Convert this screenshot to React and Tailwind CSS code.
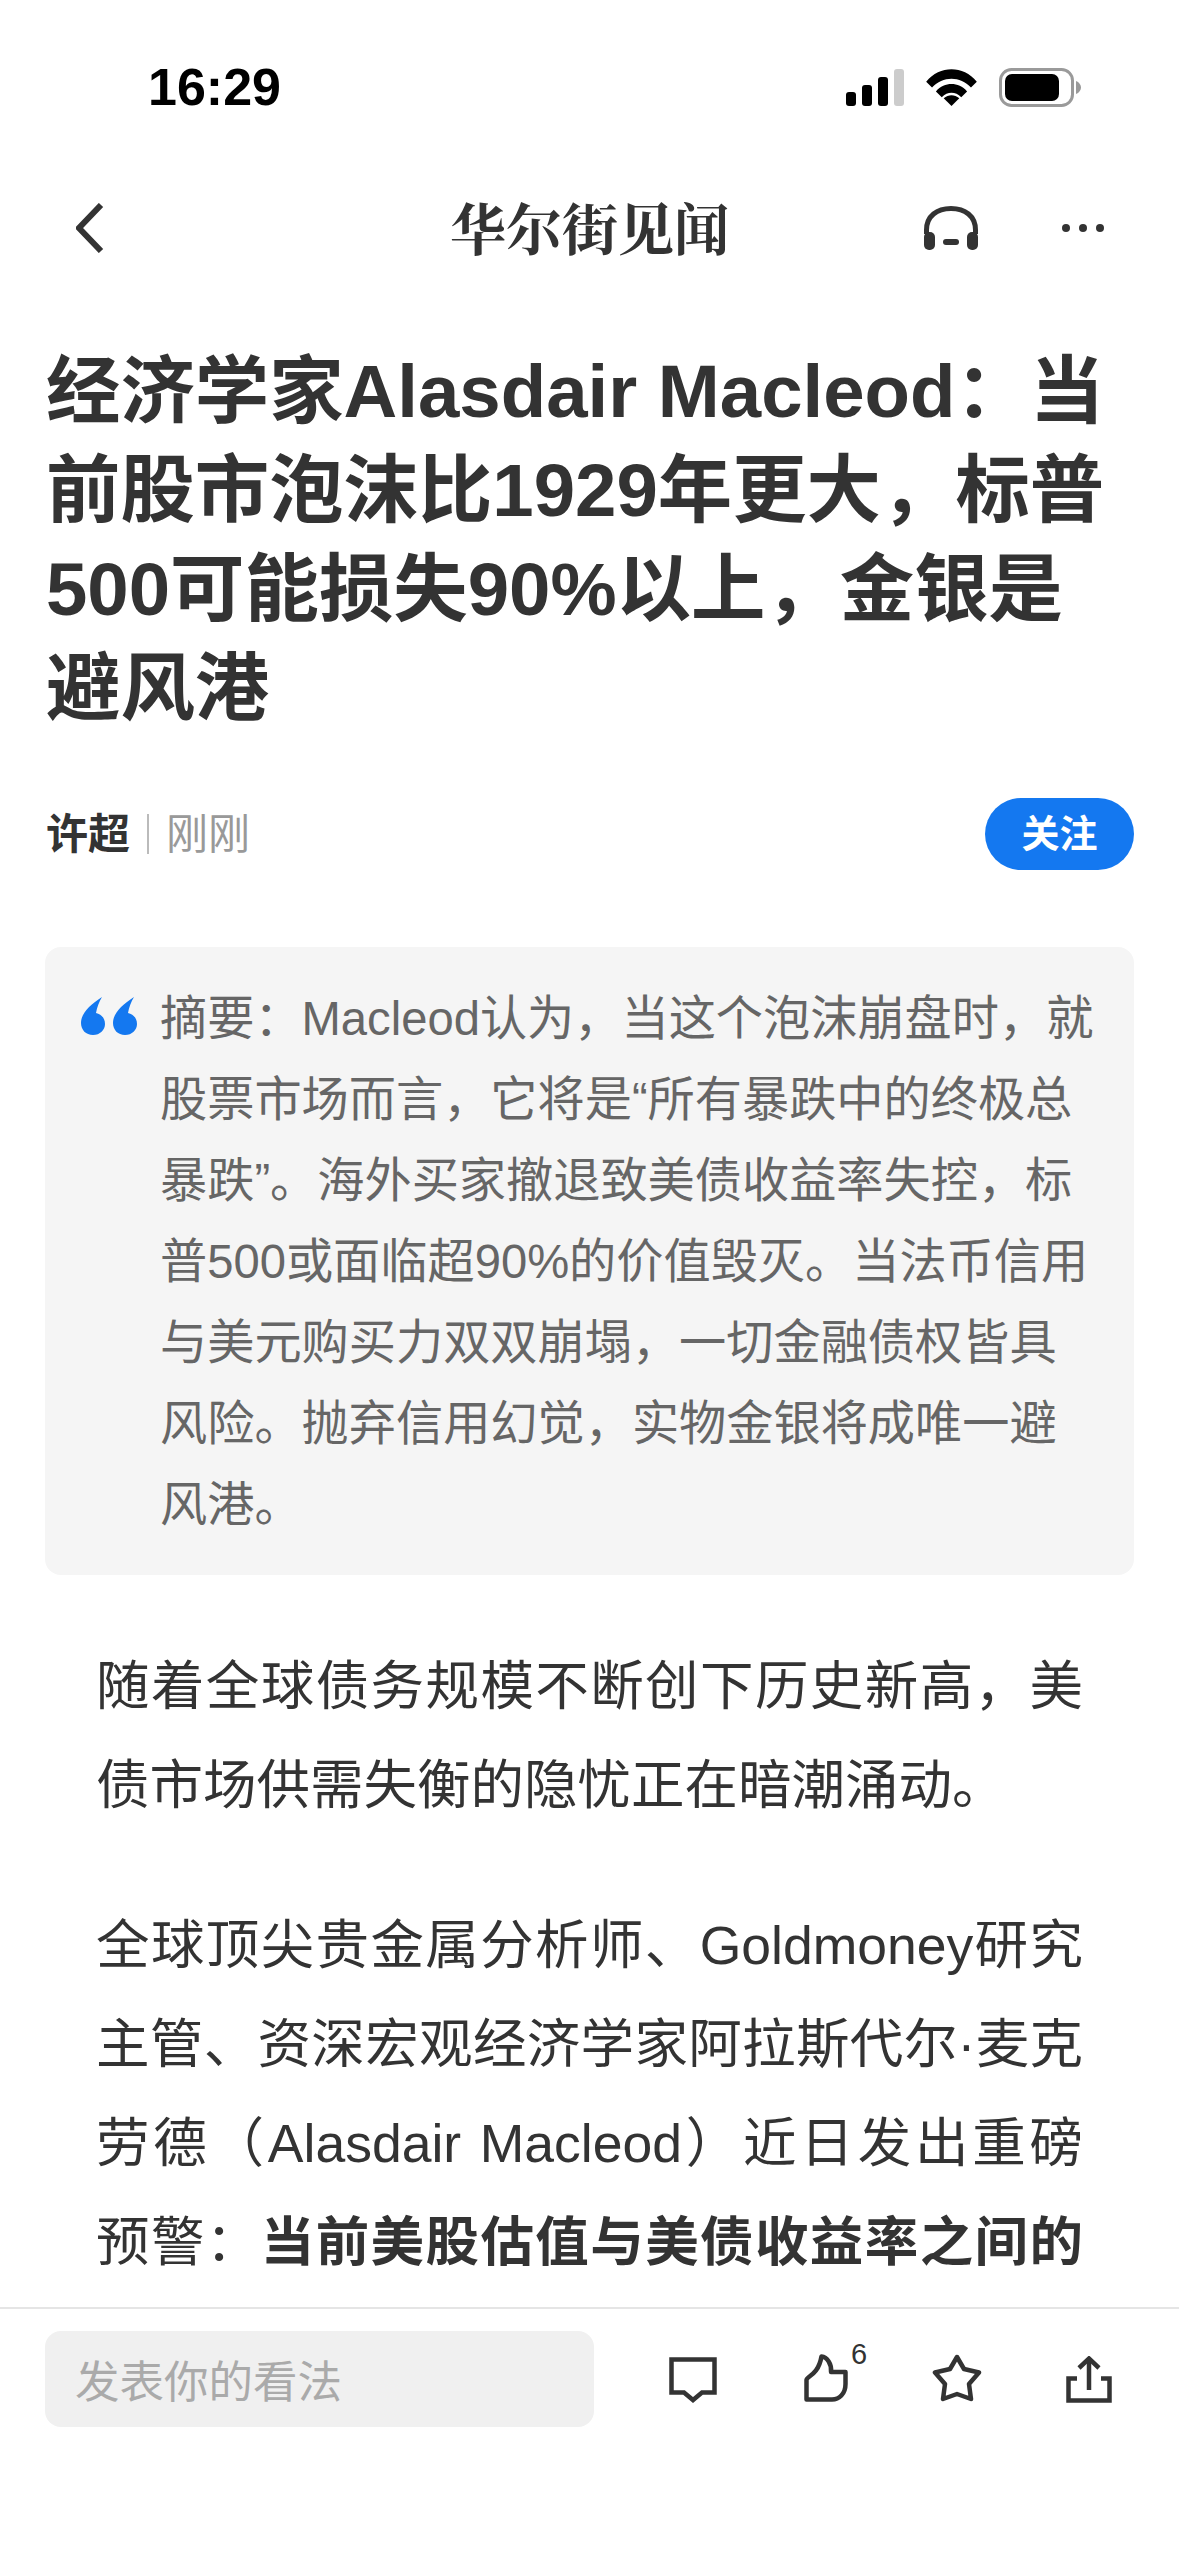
import React from 'react'

const Signal = () => (
  <svg width="58" height="37" viewBox="0 0 58 37">
    <rect x="0" y="23" width="10" height="14" rx="3" fill="#000" />
    <rect x="16" y="16" width="10" height="21" rx="3" fill="#000" />
    <rect x="32" y="8" width="10" height="29" rx="3" fill="#000" />
    <rect x="48" y="0" width="10" height="37" rx="3" fill="#ccc" />
  </svg>
)

const Wifi = () => (
  <svg width="51" height="37" viewBox="0 0 52 38">
    <path d="M0 13C14 -4 38 -4 52 13L46 19C35 7 17 7 6 19Z" fill="#000" />
    <path d="M10 23C19 13 33 13 42 23L36 29C30 23 22 23 16 29Z" fill="#000" />
    <path d="M18 30C23 26 29 26 34 30L26 38Z" fill="#000" />
  </svg>
)

const Battery = () => (
  <svg width="82" height="39" viewBox="0 0 82 39">
    <rect x="1.5" y="1.5" width="72" height="36" rx="11" fill="none" stroke="#9a9a9a" strokeWidth="3" />
    <rect x="6" y="6" width="54" height="27" rx="7" fill="#000" />
    <path d="M77 13C80 14 82 17 82 19.5C82 22 80 25 77 26Z" fill="#9a9a9a" />
  </svg>
)

const Headphones = () => (
  <svg width="56" height="44" viewBox="0 0 56 44" fill="#333">
    <path d="M3.5 28V24C3.5 10 14 2.5 28 2.5C42 2.5 52.5 10 52.5 24V28" fill="none" stroke="#333" strokeWidth="5" />
    <rect x="1" y="26" width="11" height="18" rx="5" />
    <rect x="44" y="26" width="11" height="18" rx="5" />
    <rect x="20" y="33" width="16" height="6" rx="3" />
  </svg>
)

const Comment = () => (
  <svg className="mt-[3px] mr-[3px]" width="48" height="46" viewBox="0 0 48 46" fill="none" stroke="#333" strokeWidth="4.5">
    <path d="M2.5 2.5H45.5V35.5H33L24 43L15 35.5H2.5Z" />
  </svg>
)

const Thumb = () => (
  <svg width="44" height="48" viewBox="0 0 44 48" fill="none" stroke="#333" strokeWidth="4.5" strokeLinejoin="round">
    <path d="M2.5 45.5V26C2.5 22 14 22 17.5 2.5C23 3 28 10 27 18H41.5V30C41.5 40 35 45.5 28 45.5Z" />
  </svg>
)

const Star = () => (
  <svg width="50" height="48" viewBox="0 0 50 48" fill="none" stroke="#333" strokeWidth="4.5" strokeLinejoin="round">
    <path d="M25 3L32 15L47 18.5L37 30L39 45L25 40L11 45L13 30L3 18.5L18 15Z" />
  </svg>
)

const Share = () => (
  <svg className="mt-[2px]" width="46" height="47" viewBox="0 0 46 47" fill="none" stroke="#333" strokeWidth="4.5">
    <path d="M11 22.5H2.5V44.5H43.5V22.5H35" />
    <path d="M23 34V4" />
    <path d="M13 12L23 2.5L33 12" />
  </svg>
)

const App = () => {
  return (
    <div className="w-[1179px] h-[2556px] bg-white overflow-hidden flex flex-col font-['Liberation_Sans','Noto_Sans_CJK_SC',sans-serif]">
      {/* Status bar */}
      <div className="h-[64px] mt-[55px] shrink-0 flex items-center justify-between pl-[148px] pr-[98px]">
        <span className="text-[52px] leading-none font-bold text-black">16:29</span>
        <div className="flex items-center gap-[22px]">
          <Signal />
          <Wifi />
          <Battery />
        </div>
      </div>

      {/* Nav */}
      <div className="h-[70px] mt-[74px] shrink-0 grid grid-cols-[1fr_auto_1fr] items-center pl-[76px] pr-[75px]">
        <svg width="28" height="50" viewBox="0 0 28 50" fill="none" stroke="#333" strokeWidth="6">
          <path d="M25 2L3 25L25 48" />
        </svg>
        <span className="pb-[4px] text-[56px] leading-none font-bold text-[#333] font-['Noto_Serif_CJK_SC','Noto_Sans_CJK_SC',serif]">华尔街见闻</span>
        <div className="flex items-center justify-end gap-[83px]">
          <Headphones />
          <div className="flex gap-[9px]">
            <span className="w-[8px] h-[8px] rounded-full bg-[#333]" />
            <span className="w-[8px] h-[8px] rounded-full bg-[#333]" />
            <span className="w-[8px] h-[8px] rounded-full bg-[#333]" />
          </div>
        </div>
      </div>

      {/* Title */}
      <h1 className="mt-[79px] pl-[46px] pr-[60px] text-[74.4px] leading-[99px] font-bold text-[#333]">
        经济学家Alasdair Macleod：当前股市泡沫比1929年更大，标普500可能损失90%以上，金银是避风港
      </h1>

      {/* Author */}
      <div className="mt-[60px] pl-[46px] pr-[45px] flex items-center justify-between h-[72px]">
        <div className="flex items-center text-[42px]">
          <span className="font-bold text-[#333]">许超</span>
          <span className="w-[2px] h-[40px] bg-[#bbb] mx-[17px]" />
          <span className="text-[#999]">刚刚</span>
        </div>
        <button className="w-[149px] h-[72px] rounded-full bg-[#1478f0] text-white text-[38px] font-bold">关注</button>
      </div>

      {/* Summary */}
      <div className="mt-[77px] mx-[45px] h-[628px] rounded-[16px] bg-[#f5f5f5] flex pl-[36px] pr-[34px] pt-[31px] gap-[23px]">
        <svg className="shrink-0 mt-[19px]" width="56" height="38" viewBox="0 0 56 38" fill="#1478f0">
          <path d="M21 0C9 8 0 16 0 26C0 33 5 38 12 38C19 38 24 33 24 27C24 21 20 17 15 16C16 10 18 5 21 0Z" />
          <path d="M53 0C41 8 32 16 32 26C32 33 37 38 44 38C51 38 56 33 56 27C56 21 52 17 47 16C48 10 50 5 53 0Z" />
        </svg>
        <p className="text-[47.2px] leading-[81px] text-[#666]">
          摘要：Macleod认为，当这个泡沫崩盘时，就股票市场而言，它将是“所有暴跌中的终极总暴跌”。海外买家撤退致美债收益率失控，标普500或面临超90%的价值毁灭。当法币信用与美元购买力双双崩塌，一切金融债权皆具风险。抛弃信用幻觉，实物金银将成唯一避风港。
        </p>
      </div>

      {/* Body */}
      <div className="mt-[62px] px-[96px] text-[53.5px] leading-[99px] text-[#333] text-justify">
        <p>随着全球债务规模不断创下历史新高，美债市场供需失衡的隐忧正在暗潮涌动。</p>
        <p className="mt-[61px] [text-align-last:justify]">
          全球顶尖贵金属分析师、Goldmoney研究主管、资深宏观经济学家阿拉斯代尔·麦克劳德（Alasdair Macleod）近日发出重磅预警：<b>当前美股估值与美债收益率之间的</b>
        </p>
      </div>

      {/* Bottom bar */}
      <div className="absolute top-[2307px] left-0 w-[1179px] h-[249px] bg-white border-t-2 border-[#e5e5e5] pl-[45px] pr-[67px] pt-[22px] flex items-start justify-between">
        <div className="w-[549px] h-[96px] rounded-[16px] bg-[#f0f0f0] flex items-center pl-[30px] pt-[8px] text-[44.5px] text-[#aaa]">发表你的看法</div>
        <div className="flex items-start gap-[84px] pt-[23px]">
          <Comment />
          <div className="relative">
            <Thumb />
            <span className="absolute -top-[14px] left-[47px] text-[29px] leading-none text-[#333]">6</span>
          </div>
          <Star />
          <Share />
        </div>
      </div>
    </div>
  )
}

export default App
